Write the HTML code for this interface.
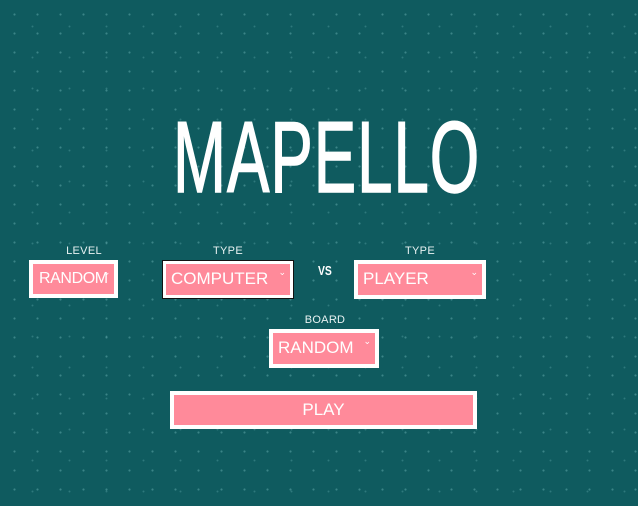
<!DOCTYPE html>
<html><head><style>
html,body{margin:0;padding:0}
body{width:638px;height:506px;overflow:hidden;background:#0f5b5f;position:relative;font-family:"Liberation Sans",sans-serif;
background-image:radial-gradient(circle,rgba(140,210,210,.35) 0.8px,transparent 1.3px),radial-gradient(circle,rgba(140,210,210,.25) 0.7px,transparent 1.2px);
background-size:23px 19px,37px 31px;background-position:3px 5px,14px 11px}
.t{position:absolute;left:173px;top:101px;font-size:101px;color:#fff;transform:scaleX(0.63);transform-origin:0 0;white-space:nowrap;letter-spacing:1.5px;-webkit-text-stroke:1.5px #fff}
.lbl{position:absolute;color:#e8f2f2;font-size:11px;transform:translateX(-50%);letter-spacing:.3px}
.sel{position:absolute;box-sizing:border-box;border:4px solid #fff;background:#ff8a9a;color:#fff;font-size:17px;line-height:30px;padding-left:5px;white-space:nowrap;overflow:hidden}
.ar:after{content:"\2304";position:absolute;right:4px;top:3px;font-size:9px;line-height:10px}
.vs{position:absolute;left:318px;top:263px;color:#fff;font-weight:bold;font-size:13px;transform:scaleX(.8);transform-origin:0 0}
</style></head><body>
<div class="t">MAPELLO</div>
<div class="lbl" style="left:84px;top:245px">LEVEL</div>
<div class="lbl" style="left:228px;top:245px">TYPE</div>
<div class="lbl" style="left:420px;top:245px">TYPE</div>
<div class="sel ar" style="left:29px;top:260px;width:89px;height:38px;padding-left:6px;font-size:16px;letter-spacing:-0.4px">RANDOM</div>
<div class="sel ar" style="left:162px;top:260px;width:132px;height:39px;outline:1px solid #111;outline-offset:-1px">COMPUTER</div>
<div class="vs">VS</div>
<div class="sel ar" style="left:354px;top:260px;width:132px;height:39px">PLAYER</div>
<div class="lbl" style="left:325px;top:314px">BOARD</div>
<div class="sel ar" style="left:269px;top:329px;width:110px;height:39px">RANDOM</div>
<div class="sel" style="left:170px;top:391px;width:307px;height:38px;text-align:center;padding:0">PLAY</div>
</body></html>
